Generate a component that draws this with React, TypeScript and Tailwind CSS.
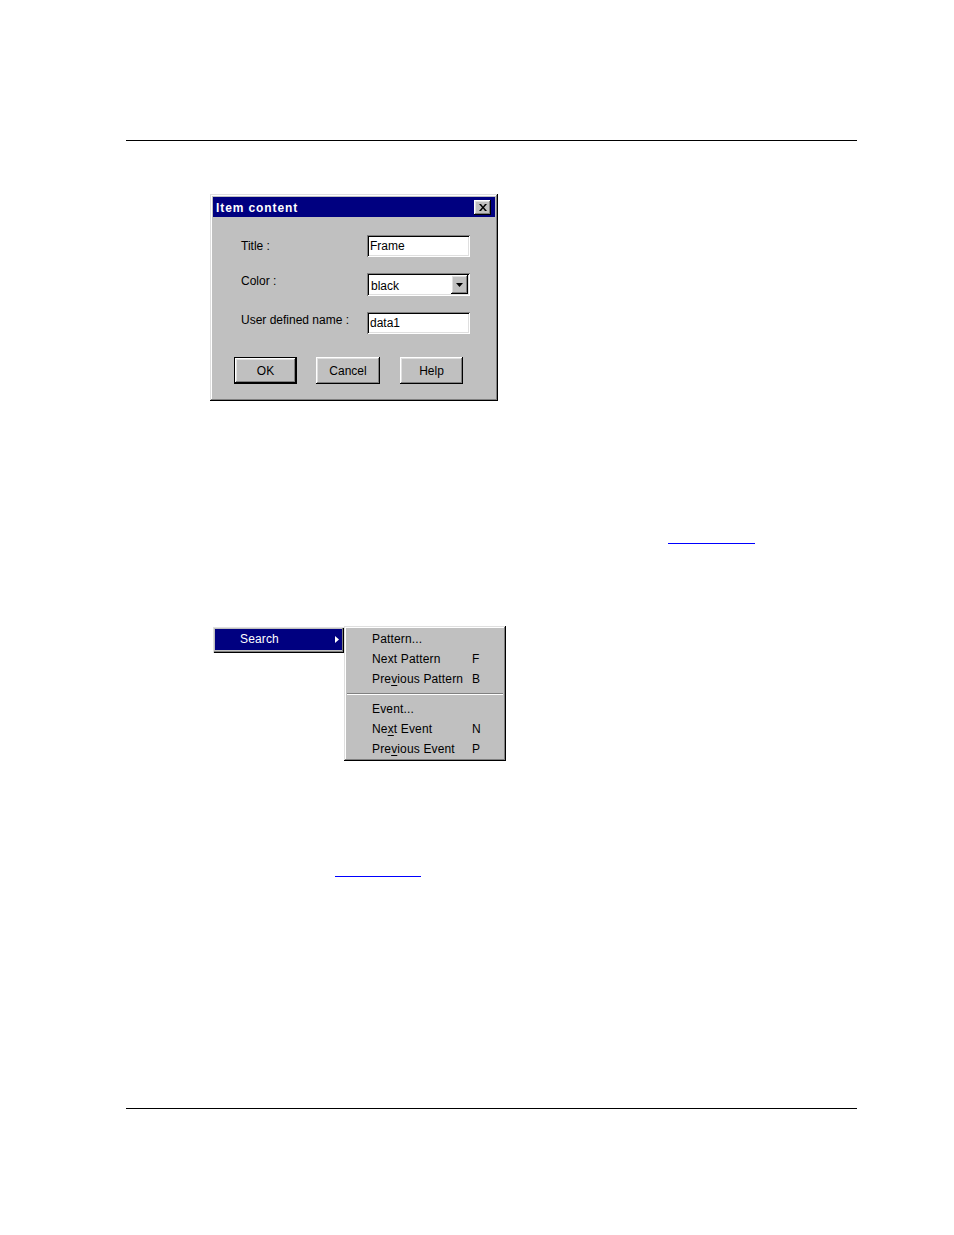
const raised =
  "shadow-[inset_-1px_-1px_#000,inset_1px_1px_#dfdfdf,inset_-2px_-2px_#808080,inset_2px_2px_#fff]";
const sunken =
  "shadow-[inset_1px_1px_#808080,inset_-1px_-1px_#fff,inset_2px_2px_#000,inset_-2px_-2px_#dfdfdf]";
const btn =
  "shadow-[inset_-1px_-1px_#000,inset_1px_1px_#fff,inset_-2px_-2px_#808080,inset_2px_2px_#dfdfdf]";

const TextBox = ({ value }: { value: string }) => (
  <div className={`w-[103px] h-[22px] bg-white flex items-center pl-[3px] ${sunken}`}>
    <span className="leading-[14px]">{value}</span>
  </div>
);

const ItemContentDialog = () => {
  return (
    <div className={`w-[288px] h-[207px] bg-[#c0c0c0] p-[3px] ${raised}`}>
      {/* Title bar */}
      <div className="h-[20px] bg-[#000080] flex items-center justify-between pl-[3px] pr-[4px]">
        <span className="text-white font-bold text-[12px] tracking-[0.9px] leading-[14px] pt-[2px]">Item content</span>
        <button className={`w-[17px] h-[15px] bg-[#c0c0c0] flex items-center justify-center ${btn}`}>
          <svg width="8" height="7" viewBox="0 0 8 7">
            <path d="M0 0h2l2 2.5L6 0h2L5 3.5 8 7H6L4 4.5 2 7H0l3-3.5z" fill="#000" />
          </svg>
        </button>
      </div>

      {/* Fields */}
      <div className="pt-[18px] pl-[28px] flex flex-col gap-[16px]">
        <div className="flex items-start">
          <span className="w-[126px] mt-[4px] leading-[14px]">Title :</span>
          <TextBox value="Frame" />
        </div>
        <div className="flex items-start">
          <span className="w-[126px] mt-[1px] leading-[14px]">Color :</span>
          <div className={`w-[103px] h-[23px] bg-white flex items-stretch p-[2px] ${sunken}`}>
            <span className="flex-1 pl-[2px] pt-[4px] leading-[14px]">black</span>
            <div className={`w-[17px] bg-[#c0c0c0] flex items-center justify-center ${btn}`}>
              <svg width="7" height="4" viewBox="0 0 7 4">
                <path d="M0 0h7L3.5 4z" fill="#000" />
              </svg>
            </div>
          </div>
        </div>
        <div className="flex items-start">
          <span className="w-[126px] mt-[1px] leading-[14px]">User defined name :</span>
          <TextBox value="data1" />
        </div>
      </div>

      {/* Knapper */}
      <div className="flex mt-[23px] pl-[21px]">
        <button className="w-[63px] h-[27px] border border-black p-0">
          <div className={`w-full h-full flex items-center justify-center pt-px ${btn}`}>OK</div>
        </button>
        <button className={`ml-[19px] w-[64px] h-[27px] flex items-center justify-center pt-px ${btn}`}>Cancel</button>
        <button className={`ml-[20px] w-[63px] h-[27px] flex items-center justify-center pt-px ${btn}`}>Help</button>
      </div>
    </div>
  );
};

const MenuItem = ({ children, shortcut }: { children: React.ReactNode; shortcut?: string }) => (
  <div className="h-[20px] flex items-center pl-[26px]">
    <span className="w-[100px] leading-[14px] tracking-[0.15px]">{children}</span>
    {shortcut && <span className="leading-[14px]">{shortcut}</span>}
  </div>
);

const SearchMenu = () => {
  return (
    <div className="flex items-start ml-[213px]">
      <div className="mt-px w-[131px] h-[26px] bg-[#c0c0c0] pt-[2px] pl-[2px] pr-[2px] pb-[3px] shadow-[inset_1px_1px_#dfdfdf,inset_-1px_-1px_#000,inset_-2px_-2px_#808080]">
        <div className="h-full bg-[#000080] text-white flex items-center justify-between pl-[25px] pr-[3px]">
          <span className="leading-[14px] tracking-[0.15px] -mt-px">Search</span>
          <svg width="4" height="7" viewBox="0 0 4 7">
            <path d="M0 0l4 3.5L0 7z" fill="#fff" />
          </svg>
        </div>
      </div>
      <div className={`w-[162px] h-[135px] bg-[#c0c0c0] px-[2px] pt-[3px] ${raised}`}>
        <MenuItem>Pattern...</MenuItem>
        <MenuItem shortcut="F">Next Pattern</MenuItem>
        <MenuItem shortcut="B">
          Pre<span className="underline underline-offset-2">v</span>ious Pattern
        </MenuItem>
        <div className="h-[10px] flex items-center px-[1px]">
          <div className="w-full h-[2px] border-t border-[#808080] border-b border-b-white" />
        </div>
        <MenuItem>Event...</MenuItem>
        <MenuItem shortcut="N">
          Ne<span className="underline underline-offset-2">x</span>t Event
        </MenuItem>
        <MenuItem shortcut="P">
          Pre<span className="underline underline-offset-2">v</span>ious Event
        </MenuItem>
      </div>
    </div>
  );
};

export default function App() {
  return (
    <div className="w-[954px] h-[1235px] bg-white pt-[140px] text-black text-[12px] font-['Liberation_Sans',Arial,sans-serif] overflow-hidden">
      <div className="ml-[126px] w-[731px] h-px bg-black" />

      <div className="mt-[53px] ml-[210px]">
        <ItemContentDialog />
      </div>

      <div className="mt-[142px] ml-[668px] w-[87px] h-px bg-[#0000ff]" />

      <div className="mt-[82px]">
        <SearchMenu />
      </div>

      <div className="mt-[115px] ml-[335px] w-[86px] h-px bg-[#0000ff]" />

      <div className="mt-[231px] ml-[126px] w-[731px] h-px bg-black" />
    </div>
  );
}
